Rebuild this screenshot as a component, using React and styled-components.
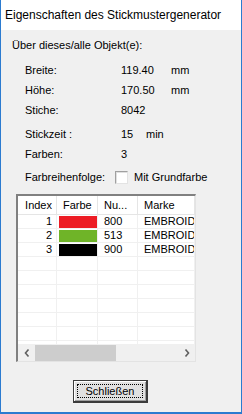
import styled, { createGlobalStyle } from "styled-components";

const GlobalStyle = createGlobalStyle`
  html, body {
    margin: 0;
    padding: 0;
    background: #f0f0f0;
  }
  * {
    box-sizing: border-box;
  }
`;

const Window = styled.div`
  width: 242px;
  height: 414px;
  display: flex;
  flex-direction: column;
  border: 1px solid #2b7bd0;
  border-top: none;
  border-bottom-width: 2px;
  background: #f0f0f0;
  font-family: "Liberation Sans", Arial, sans-serif;
  font-size: 11px;
  color: #000;
  overflow: hidden;
`;

const TitleBar = styled.div`
  height: 30px;
  flex: none;
  display: flex;
  align-items: center;
  padding-left: 4px;
  background: #fff;
  font-size: 12px;
  color: #000;
  white-space: nowrap;
`;

const Body = styled.div`
  flex: 1;
  display: flex;
  flex-direction: column;
`;

const Heading = styled.div`
  margin: 9px 0 0 11px;
  height: 13px;
  line-height: 13px;
`;

const PropList = styled.div`
  display: flex;
  flex-direction: column;
  padding-left: 24px;
  margin-top: 8px;
`;

const PropRow = styled.div`
  display: flex;
  align-items: center;
  height: 20px;
  margin-top: ${(p) => p.$top || 0}px;
`;

const Label = styled.span`
  width: ${(p) => p.$w || 96}px;
  flex: none;
`;

const Value = styled.span`
  width: ${(p) => p.$w || 50}px;
  flex: none;
`;

const Check = styled.span`
  width: 13px;
  height: 13px;
  flex: none;
  background: #fff;
  border: 1px solid;
  border-color: #a0a0a0 #e3e3e3 #e3e3e3 #a0a0a0;
  box-shadow: inset 1px 1px 0 #e0e0e0;
  margin-right: 6px;
`;

const Table = styled.div`
  margin: 7px 0 0 15px;
  width: 180px;
  height: 168px;
  display: flex;
  flex-direction: column;
  border: 1px solid;
  border-color: #808080 #e3e3e3 #e3e3e3 #808080;
  border-top-width: 2px;
  border-left-width: 2px;
  background: #fff;
  overflow: hidden;
`;

const GridRow = styled.div`
  display: grid;
  grid-template-columns: 39px 41px 40px 1fr;
  height: ${(p) => (p.$head ? 19 : 14)}px;
  flex: none;
  border-bottom: 1px solid ${(p) => (p.$head ? "#e5e5e5" : "#f0f0f0")};
`;

const Cell = styled.div`
  display: flex;
  align-items: center;
  justify-content: ${(p) => (p.$right ? "flex-end" : "flex-start")};
  padding: ${(p) => (p.$right ? "0 4px 0 0" : "0 0 0 6px")};
  border-right: 1px solid ${(p) => (p.$head ? "#e5e5e5" : "#f0f0f0")};
  white-space: nowrap;
  overflow: hidden;
  line-height: 13px;
`;

const Rows = styled.div`
  flex: 1;
  overflow: hidden;
`;

const Swatch = styled.div`
  width: 38px;
  height: 12px;
  margin: 1px 0 0 2px;
  background: ${(p) => p.$color};
`;

const SwatchCell = styled.div`
  border-right: 1px solid #f0f0f0;
`;

const ScrollBar = styled.div`
  height: 17px;
  flex: none;
  display: grid;
  grid-template-columns: 17px 81px 1fr 17px;
  background: #f0f0f0;
`;

const ScrollArrow = styled.div`
  display: flex;
  align-items: center;
  justify-content: center;
`;

const Thumb = styled.div`
  background: #cdcdcd;
  margin: 1px 0 0 0;
`;

const Footer = styled.div`
  margin: 18px 0 0 72px;
`;

const Button = styled.div`
  position: relative;
  width: 75px;
  height: 23px;
  display: flex;
  align-items: center;
  justify-content: center;
  background: #e1e1e1;
  border: 1px solid #3c3c3c;
  border-right-width: 2px;
  border-bottom-width: 2px;
  box-shadow: inset 1px 1px 0 #fff, inset -1px -1px 0 #a0a0a0;

  &::after {
    content: "";
    position: absolute;
    inset: 3px;
    border: 1px dotted #000;
  }
`;

const colors = [
  { index: 1, color: "#ed1c24", nr: "800", brand: "EMBROID" },
  { index: 2, color: "#6fb428", nr: "513", brand: "EMBROID" },
  { index: 3, color: "#000000", nr: "900", brand: "EMBROID" },
];

const Chevron = ({ left }) => (
  <svg width="6" height="8" viewBox="0 0 6 8">
    <path
      d={left ? "M4.5 0.5 L1.5 4 L4.5 7.5" : "M1.5 0.5 L4.5 4 L1.5 7.5"}
      fill="none"
      stroke="#606060"
      strokeWidth="1.6"
    />
  </svg>
);

export default function App() {
  return (
    <>
      <GlobalStyle />
      <Window>
        <TitleBar>Eigenschaften des Stickmustergenerator</TitleBar>
        <Body>
          <Heading>Über dieses/alle Objekt(e):</Heading>
          <PropList>
            <PropRow>
              <Label>Breite:</Label>
              <Value>119.40</Value>
              <span>mm</span>
            </PropRow>
            <PropRow>
              <Label>Höhe:</Label>
              <Value>170.50</Value>
              <span>mm</span>
            </PropRow>
            <PropRow>
              <Label>Stiche:</Label>
              <Value>8042</Value>
            </PropRow>
            <PropRow $top={4}>
              <Label>Stickzeit :</Label>
              <Value $w={25}>15</Value>
              <span>min</span>
            </PropRow>
            <PropRow>
              <Label>Farben:</Label>
              <Value>3</Value>
            </PropRow>
            <PropRow $top={3}>
              <Label $w={90}>Farbreihenfolge:</Label>
              <Check />
              <span>Mit Grundfarbe</span>
            </PropRow>
          </PropList>

          <Table>
            <GridRow $head>
              <Cell $head $right>Index</Cell>
              <Cell $head>Farbe</Cell>
              <Cell $head>Nu...</Cell>
              <Cell $head>Marke</Cell>
            </GridRow>
            <Rows>
              {colors.map((c) => (
                <GridRow key={c.index}>
                  <Cell $right>{c.index}</Cell>
                  <SwatchCell>
                    <Swatch $color={c.color} />
                  </SwatchCell>
                  <Cell>{c.nr}</Cell>
                  <Cell>{c.brand}</Cell>
                </GridRow>
              ))}
              {Array.from({ length: 7 }).map((_, i) => (
                <GridRow key={"e" + i}>
                  <Cell />
                  <Cell />
                  <Cell />
                  <Cell />
                </GridRow>
              ))}
            </Rows>
            <ScrollBar>
              <ScrollArrow>
                <Chevron left />
              </ScrollArrow>
              <Thumb />
              <div />
              <ScrollArrow>
                <Chevron />
              </ScrollArrow>
            </ScrollBar>
          </Table>

          <Footer>
            <Button>Schließen</Button>
          </Footer>
        </Body>
      </Window>
    </>
  );
}
